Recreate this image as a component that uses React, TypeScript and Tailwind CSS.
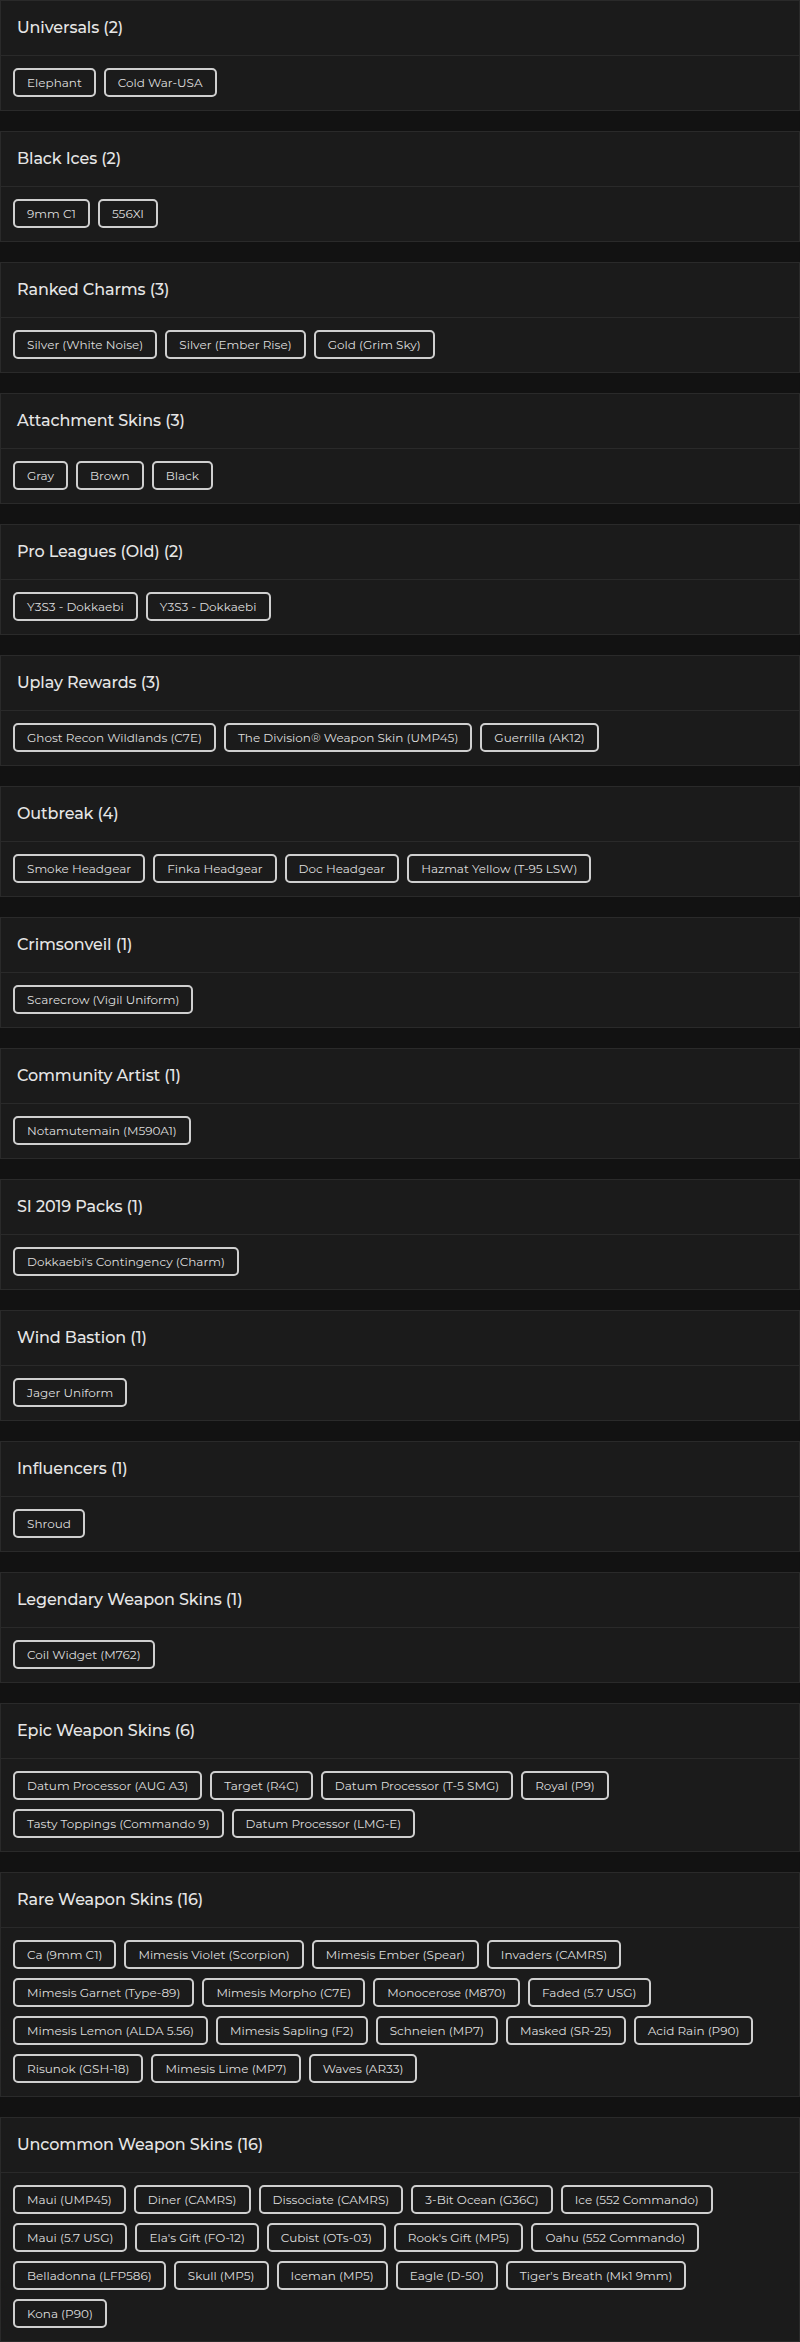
import React from "react"

interface Section {
  title: string
  items: string[]
}

const sections: Section[] = [
  { title: "Universals", items: ["Elephant", "Cold War-USA"] },
  { title: "Black Ices", items: ["9mm C1", "556XI"] },
  { title: "Ranked Charms", items: ["Silver (White Noise)", "Silver (Ember Rise)", "Gold (Grim Sky)"] },
  { title: "Attachment Skins", items: ["Gray", "Brown", "Black"] },
  { title: "Pro Leagues (Old)", items: ["Y3S3 - Dokkaebi", "Y3S3 - Dokkaebi"] },
  {
    title: "Uplay Rewards",
    items: ["Ghost Recon Wildlands (C7E)", "The Division® Weapon Skin (UMP45)", "Guerrilla (AK12)"],
  },
  {
    title: "Outbreak",
    items: ["Smoke Headgear", "Finka Headgear", "Doc Headgear", "Hazmat Yellow (T-95 LSW)"],
  },
  { title: "Crimsonveil", items: ["Scarecrow (Vigil Uniform)"] },
  { title: "Community Artist", items: ["Notamutemain (M590A1)"] },
  { title: "SI 2019 Packs", items: ["Dokkaebi's Contingency (Charm)"] },
  { title: "Wind Bastion", items: ["Jager Uniform"] },
  { title: "Influencers", items: ["Shroud"] },
  { title: "Legendary Weapon Skins", items: ["Coil Widget (M762)"] },
  {
    title: "Epic Weapon Skins",
    items: [
      "Datum Processor (AUG A3)",
      "Target (R4C)",
      "Datum Processor (T-5 SMG)",
      "Royal (P9)",
      "Tasty Toppings (Commando 9)",
      "Datum Processor (LMG-E)",
    ],
  },
  {
    title: "Rare Weapon Skins",
    items: [
      "Ca (9mm C1)",
      "Mimesis Violet (Scorpion)",
      "Mimesis Ember (Spear)",
      "Invaders (CAMRS)",
      "Mimesis Garnet (Type-89)",
      "Mimesis Morpho (C7E)",
      "Monocerose (M870)",
      "Faded (5.7 USG)",
      "Mimesis Lemon (ALDA 5.56)",
      "Mimesis Sapling (F2)",
      "Schneien (MP7)",
      "Masked (SR-25)",
      "Acid Rain (P90)",
      "Risunok (GSH-18)",
      "Mimesis Lime (MP7)",
      "Waves (AR33)",
    ],
  },
  {
    title: "Uncommon Weapon Skins",
    items: [
      "Maui (UMP45)",
      "Diner (CAMRS)",
      "Dissociate (CAMRS)",
      "3-Bit Ocean (G36C)",
      "Ice (552 Commando)",
      "Maui (5.7 USG)",
      "Ela's Gift (FO-12)",
      "Cubist (OTs-03)",
      "Rook's Gift (MP5)",
      "Oahu (552 Commando)",
      "Belladonna (LFP586)",
      "Skull (MP5)",
      "Iceman (MP5)",
      "Eagle (D-50)",
      "Tiger's Breath (Mk1 9mm)",
      "Kona (P90)",
    ],
  },
]

function SectionCard({ section }: { section: Section }) {
  return (
    <div className="bg-[#1b1b1b] border border-[#2a2a2a]">
      <div className="px-4 py-4 border-b border-[#2a2a2a]">
        <h2 className="text-[16px] leading-[22px] font-medium tracking-[-0.1px] text-[#e6e6e6]">
          {section.title} ({section.items.length})
        </h2>
      </div>
      <div className="pl-[12px] pr-3 pt-3 pb-[13px] flex flex-wrap gap-x-2 gap-y-[9px]">
        {section.items.map((item, i) => (
          <span
            key={i}
            className="h-[29px] px-[12px] flex items-center border-2 border-[#cfcfcf] rounded-[5px] text-[12px] text-[#dedede] whitespace-nowrap"
          >
            {item}
          </span>
        ))}
      </div>
    </div>
  )
}

export default function App() {
  return (
    <div
      className="bg-[#121212] w-[800px] min-h-[2342px] flex flex-col gap-5"
      style={{ fontFamily: "Montserrat, Inter, 'Open Sans', sans-serif" }}
    >
      {sections.map((s) => (
        <SectionCard key={s.title} section={s} />
      ))}
    </div>
  )
}
